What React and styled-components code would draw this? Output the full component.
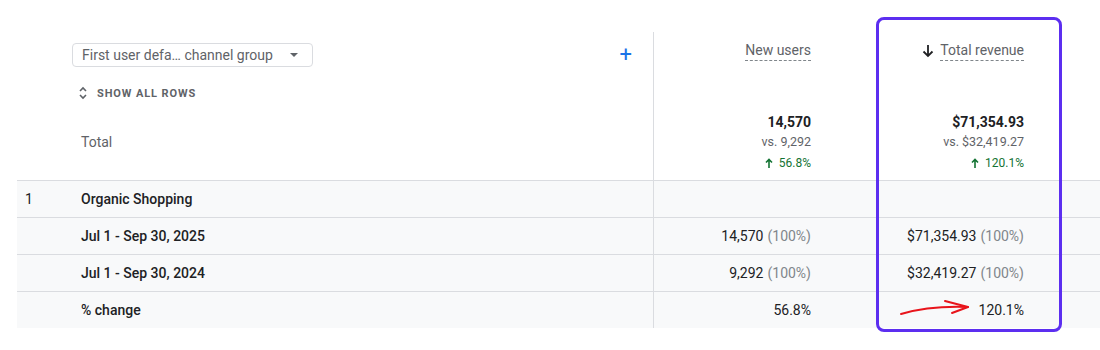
import React from 'react';
import styled, { createGlobalStyle } from 'styled-components';

const GlobalStyle = createGlobalStyle`
  body {
    margin: 0;
    background: #ffffff;
    font-family: Roboto, "Liberation Sans", Arial, sans-serif;
  }
`;

const Page = styled.div`
  position: relative;
  width: 1100px;
  height: 350px;
  padding: 32px 0 0 17px;
  box-sizing: border-box;
  overflow: hidden;
`;

const Table = styled.div`
  display: grid;
  grid-template-columns: 64px 572px 198px 213px 1fr;
`;

const HeadLeft = styled.div`
  grid-column: 1 / 3;
  height: 148px;
  display: flex;
  flex-direction: column;
  padding: 11px 0 0 55px;
  box-sizing: border-box;
  position: relative;
`;

const Dropdown = styled.div`
  width: 241px;
  height: 24px;
  box-sizing: border-box;
  border: 1px solid #dadce0;
  border-radius: 4px;
  display: flex;
  align-items: center;
  justify-content: space-between;
  padding: 0 14px 0 9px;
  font-size: 14px;
  color: #5f6368;
`;

const Caret = styled.span`
  width: 0;
  height: 0;
  border-left: 4px solid transparent;
  border-right: 4px solid transparent;
  border-top: 4px solid #5f6368;
`;

const ShowAll = styled.div`
  display: flex;
  align-items: center;
  gap: 10px;
  margin: 19px 0 0 7px;
  font-size: 11px;
  font-weight: 700;
  letter-spacing: 0.9px;
  color: #5f6368;
`;

const TotalLabel = styled.div`
  margin: 34px 0 0 9px;
  font-size: 14px;
  color: #5f6368;
`;

const PlusBtn = styled.div`
  position: absolute;
  right: 21px;
  top: 13px;
  color: #1a73e8;
  font-size: 22px;
  line-height: 20px;
`;

const HeadMetric = styled.div`
  height: 148px;
  box-sizing: border-box;
  padding: 9px 40px 7px 0;
  display: flex;
  flex-direction: column;
  justify-content: space-between;
  align-items: flex-end;
  border-left: ${p => (p.$divider ? '1px solid #dadce0' : 'none')};
`;

const MetricName = styled.div`
  display: flex;
  align-items: center;
  gap: 6px;
  font-size: 14px;
  color: #5f6368;
`;

const Dashed = styled.span`
  line-height: 19px;
  border-bottom: 1px dashed #80868b;
`;

const Totals = styled.div`
  display: flex;
  flex-direction: column;
  align-items: flex-end;
  line-height: 20.5px;
`;

const TotalValue = styled.div`
  font-size: 14px;
  font-weight: 700;
  color: #202124;
`;

const VsValue = styled.div`
  font-size: 12.5px;
  color: #5f6368;
`;

const Change = styled.div`
  font-size: 12px;
  color: #137333;
  display: flex;
  align-items: center;
  gap: 6px;
`;

const Cell = styled.div`
  height: 37px;
  box-sizing: border-box;
  border-top: 1px solid #dadce0;
  background: #f8f9fa;
  display: flex;
  align-items: center;
  font-size: 14px;
  color: #202124;
  justify-content: ${p => (p.$right ? 'flex-end' : 'flex-start')};
  padding: ${p => (p.$right ? '0 40px 0 0' : p.$index ? '0 0 0 8px' : '0')};
  font-weight: ${p => (p.$bold ? 500 : 400)};
  border-left: ${p => (p.$divider ? '1px solid #dadce0' : 'none')};
`;

const Muted = styled.span`
  color: #80868b;
  margin-left: 4px;
`;

const Highlight = styled.div`
  position: absolute;
  left: 876px;
  top: 17px;
  width: 186px;
  height: 315px;
  box-sizing: border-box;
  border: 3px solid #5c2ef0;
  border-radius: 8px;
  pointer-events: none;
`;

const Scribble = styled.svg`
  position: absolute;
  left: 896px;
  top: 296px;
`;

const UpArrow = () => (
  <svg width="8" height="10" viewBox="0 0 8 10">
    <path d="M4 10V2M1 4.5L4 1.5L7 4.5" stroke="#137333" strokeWidth="1.6" fill="none" />
  </svg>
);

const rows = [
  { name: 'Jul 1 - Sep 30, 2025', users: '14,570', usersPct: '(100%)', rev: '$71,354.93', revPct: '(100%)' },
  { name: 'Jul 1 - Sep 30, 2024', users: '9,292', usersPct: '(100%)', rev: '$32,419.27', revPct: '(100%)' },
  { name: '% change', users: '56.8%', rev: '120.1%' },
];

export default function App() {
  return (
    <Page>
      <GlobalStyle />
      <Table>
        <HeadLeft>
          <Dropdown>
            <span>First user defa… channel group</span>
            <Caret />
          </Dropdown>
          <ShowAll>
            <svg width="8" height="14" viewBox="0 0 8 14">
              <path d="M1 5L4 2L7 5M1 9L4 12L7 9" stroke="#5f6368" strokeWidth="1.6" fill="none" />
            </svg>
            SHOW ALL ROWS
          </ShowAll>
          <TotalLabel>Total</TotalLabel>
          <PlusBtn>+</PlusBtn>
        </HeadLeft>
        <HeadMetric $divider>
          <MetricName>
            <Dashed>New users</Dashed>
          </MetricName>
          <Totals>
            <TotalValue>14,570</TotalValue>
            <VsValue>vs. 9,292</VsValue>
            <Change><UpArrow />56.8%</Change>
          </Totals>
        </HeadMetric>
        <HeadMetric>
          <MetricName>
            <svg width="12" height="14" viewBox="0 0 12 14">
              <path d="M6 1V12M1.5 7.5L6 12L10.5 7.5" stroke="#202124" strokeWidth="1.8" fill="none" />
            </svg>
            <Dashed>Total revenue</Dashed>
          </MetricName>
          <Totals>
            <TotalValue>$71,354.93</TotalValue>
            <VsValue>vs. $32,419.27</VsValue>
            <Change><UpArrow />120.1%</Change>
          </Totals>
        </HeadMetric>
        <div />

        <Cell $index>1</Cell>
        <Cell $bold>Organic Shopping</Cell>
        <Cell $divider />
        <Cell />
        <Cell />

        {rows.map(r => (
          <React.Fragment key={r.name}>
            <Cell />
            <Cell $bold>{r.name}</Cell>
            <Cell $right $divider>
              {r.users}
              {r.usersPct && <Muted>{r.usersPct}</Muted>}
            </Cell>
            <Cell $right>
              {r.rev}
              {r.revPct && <Muted>{r.revPct}</Muted>}
            </Cell>
            <Cell />
          </React.Fragment>
        ))}
      </Table>
      <Highlight />
      <Scribble width="80" height="24" viewBox="0 0 80 24">
        <path d="M5 18C22 13 45 10 72 11" stroke="#e8141b" strokeWidth="2" fill="none" strokeLinecap="round" />
        <path d="M49 5L72 11L56 17" stroke="#e8141b" strokeWidth="2" fill="none" strokeLinecap="round" strokeLinejoin="round" />
      </Scribble>
    </Page>
  );
}
